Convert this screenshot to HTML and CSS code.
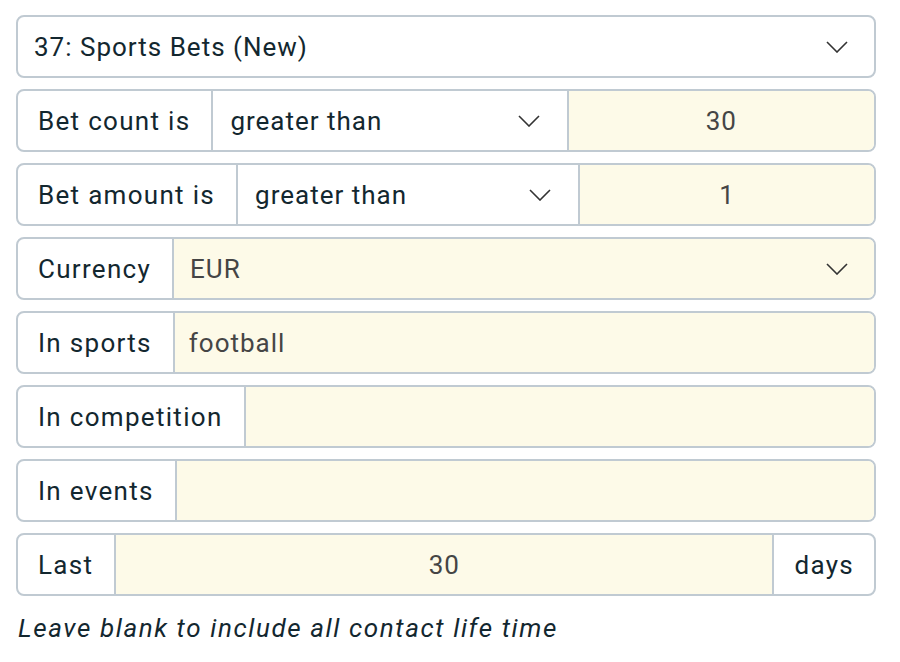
FILE: index.html
```html
<!DOCTYPE html>
<html lang="en">
<head>
    <meta charset="UTF-8">
    <title>Sports Bets</title>
    <link rel="stylesheet" href="styles.css">
</head>
<body>
    <div class="form">
        <div class="row">
            <div class="select full plain">
                <span>37: Sports Bets (New)</span>
                <svg class="chevron" viewBox="0 0 22 12"><path d="M1 1 L11 11 L21 1"/></svg>
            </div>
        </div>
        <div class="row triple">
            <div class="label">Bet count is</div>
            <div class="select">
                <span>greater than</span>
                <svg class="chevron" viewBox="0 0 22 12"><path d="M1 1 L11 11 L21 1"/></svg>
            </div>
            <div class="value center">30</div>
        </div>
        <div class="row triple">
            <div class="label">Bet amount is</div>
            <div class="select">
                <span>greater than</span>
                <svg class="chevron" viewBox="0 0 22 12"><path d="M1 1 L11 11 L21 1"/></svg>
            </div>
            <div class="value center">1</div>
        </div>
        <div class="row">
            <div class="label">Currency</div>
            <div class="select full filled">
                <span>EUR</span>
                <svg class="chevron" viewBox="0 0 22 12"><path d="M1 1 L11 11 L21 1"/></svg>
            </div>
        </div>
        <div class="row">
            <div class="label">In sports</div>
            <div class="value grow">football</div>
        </div>
        <div class="row">
            <div class="label">In competition</div>
            <div class="value grow"></div>
        </div>
        <div class="row">
            <div class="label">In events</div>
            <div class="value grow"></div>
        </div>
        <div class="row">
            <div class="label">Last</div>
            <div class="value grow center">30</div>
            <div class="label addon">days</div>
        </div>
        <p class="hint">Leave blank to include all contact life time</p>
    </div>
</body>
</html>
```

FILE: styles.css
```css
body {
    margin: 0;
    background: #fff;
    font-family: Roboto, "Liberation Sans", sans-serif;
    color: #13272f;
}
.form {
    width: 860px;
    padding: 15px 0 0 16px;
    display: flex;
    flex-direction: column;
    gap: 11px;
}
.row {
    display: flex;
    height: 63px;
    box-sizing: border-box;
    border: 2px solid #c0cad2;
    border-radius: 8px;
    overflow: hidden;
    font-size: 26px;
    letter-spacing: 1px;
}
.row.triple {
    display: grid;
    grid-template-columns: auto 1.156fr 1fr;
}
.row > div {
    display: flex;
    align-items: center;
    box-sizing: border-box;
}
.row > div + div {
    border-left: 2px solid #c0cad2;
}
.label {
    padding: 0 21px 0 20px;
    white-space: nowrap;
    letter-spacing: 1.3px;
}
.addon {
    padding: 0 20px 0 20px;
}
.select {
    justify-content: space-between;
    padding: 0 27px 0 17px;
}
.select.full {
    flex: 1;
}
.select.plain {
    padding-left: 16px;
    padding-right: 26px;
}
.select.filled {
    background: #fdfae8;
    color: #454545;
    padding-left: 16px;
    padding-right: 26px;
}
.value {
    background: #fdfae8;
    color: #454545;
    padding: 0 14px;
}
.value.grow {
    flex: 1;
}
.center {
    justify-content: center;
}
.chevron {
    width: 22px;
    height: 12px;
    fill: none;
    stroke: #333;
    stroke-width: 1.6;
}
.hint {
    margin: 6px 0 0 2px;
    font-style: italic;
    font-size: 26px;
    color: #13272f;
    letter-spacing: 1.6px;
}
```
